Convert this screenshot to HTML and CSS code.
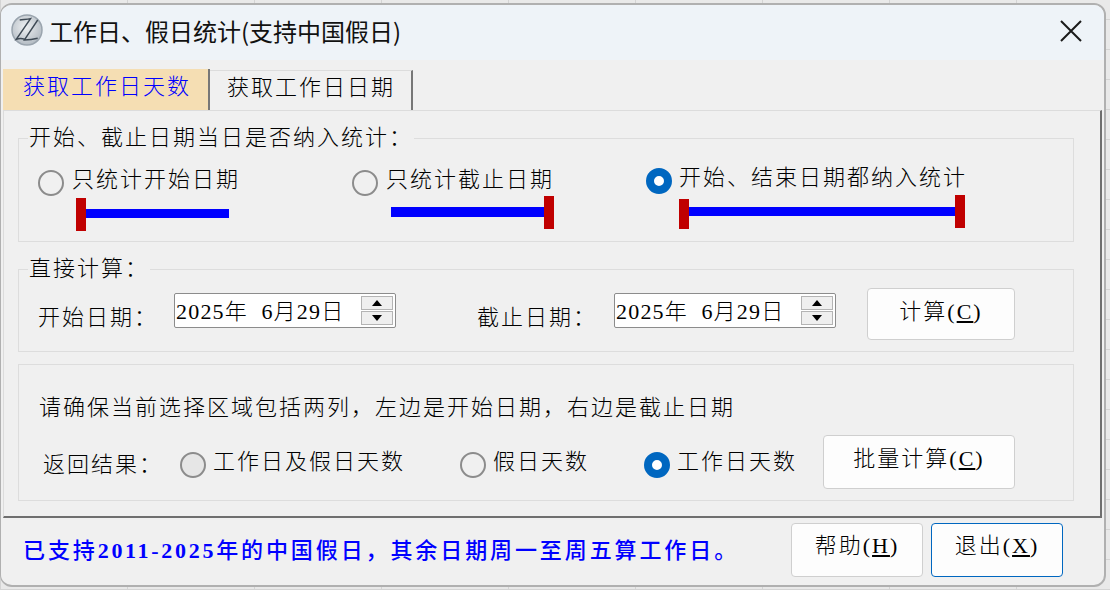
FILE: index.html
```html
<!DOCTYPE html>
<html lang="zh-CN">
<head>
    <meta charset="UTF-8">
    <meta name="viewport" content="width=device-width, initial-scale=1.0">
    <title>工作日、假日统计</title>
    <link rel="stylesheet" href="styles.css">
</head>
<body>
    <div class="window">
        <div class="titlebar">
            <svg class="app-icon" width="34" height="34" viewBox="0 0 34 34">
                <defs>
                    <radialGradient id="logoFill" cx="45%" cy="40%" r="60%">
                        <stop offset="0" stop-color="#eef0f2"/>
                        <stop offset="1" stop-color="#b4bcc4"/>
                    </radialGradient>
                </defs>
                <circle cx="17" cy="17" r="15" fill="url(#logoFill)" stroke="#9aa4ae" stroke-width="1.5"/>
                <path d="M9.7 7 C13 6.4 17 6.6 20.5 5.6 L6.3 26.3 C9 25.2 12.5 25.4 15 26.3" fill="none" stroke="#3f4a55" stroke-width="1.4"/>
                <path d="M27.7 7 L14.3 27 C18.5 27 23.5 26.4 27.7 25.3" fill="none" stroke="#3f4a55" stroke-width="1.4"/>
            </svg>
            <div class="title">工作日、假日统计(支持中国假日)</div>
            <svg class="close-icon" width="22" height="22" viewBox="0 0 22 22">
                <path d="M1 1 L21 21 M21 1 L1 21" stroke="#1a1a1a" stroke-width="2" fill="none"/>
            </svg>
        </div>

        <div class="tabs">
            <div class="tab tab-active">获取工作日天数</div>
            <div class="tab">获取工作日日期</div>
        </div>

        <div class="panel">
            <fieldset class="group group-range">
                <legend>开始、截止日期当日是否纳入统计：</legend>
                <div class="range-options">
                    <div class="range-option option-start">
                        <label class="radio-label"><span class="radio"></span>只统计开始日期</label>
                        <div class="span-bar span-start">
                            <span class="cap"></span><span class="line"></span>
                        </div>
                    </div>
                    <div class="range-option option-end">
                        <label class="radio-label"><span class="radio"></span>只统计截止日期</label>
                        <div class="span-bar span-end">
                            <span class="line"></span><span class="cap"></span>
                        </div>
                    </div>
                    <div class="range-option option-both">
                        <label class="radio-label"><span class="radio radio-checked"></span>开始、结束日期都纳入统计</label>
                        <div class="span-bar span-both">
                            <span class="cap"></span><span class="line"></span><span class="cap"></span>
                        </div>
                    </div>
                </div>
            </fieldset>

            <fieldset class="group group-direct">
                <legend>直接计算：</legend>
                <div class="direct-row">
                    <span class="field-label">开始日期：</span>
                    <div class="date-box">
                        <span class="date-text">2025年  6月29日</span>
                        <div class="spinner">
                            <span class="spin spin-up"></span>
                            <span class="spin spin-down"></span>
                        </div>
                    </div>
                    <span class="field-label label-end">截止日期：</span>
                    <div class="date-box">
                        <span class="date-text">2025年  6月29日</span>
                        <div class="spinner">
                            <span class="spin spin-up"></span>
                            <span class="spin spin-down"></span>
                        </div>
                    </div>
                    <button class="btn btn-calc">计算(<u>C</u>)</button>
                </div>
            </fieldset>

            <div class="group group-batch">
                <p class="batch-note">请确保当前选择区域包括两列，左边是开始日期，右边是截止日期</p>
                <div class="batch-row">
                    <span class="result-label">返回结果：</span>
                    <label class="radio-label result-both"><span class="radio radio-grey"></span>工作日及假日天数</label>
                    <label class="radio-label result-holiday"><span class="radio"></span>假日天数</label>
                    <label class="radio-label result-work"><span class="radio radio-checked"></span>工作日天数</label>
                    <button class="btn btn-batch">批量计算(<u>C</u>)</button>
                </div>
            </div>
        </div>

        <div class="footer">
            <div class="support-note">已支持<span class="num">2011-2025</span>年的中国假日，其余日期周一至周五算工作日。</div>
            <button class="btn btn-foot">帮助(<u>H</u>)</button>
            <button class="btn btn-foot btn-focus">退出(<u>X</u>)</button>
        </div>
    </div>
</body>
</html>
```
FILE: styles.css
```css
html, body {
    height: 100%;
}
body {
    margin: 0;
    overflow: hidden;
    background-color: #e9e9e9;
    background-image:
        repeating-linear-gradient(90deg, #d4d4d4 0, #d4d4d4 1px, transparent 1px, transparent 127px),
        repeating-linear-gradient(0deg, #d4d4d4 0, #d4d4d4 1px, transparent 1px, transparent 30px);
    font-family: "Liberation Serif", "Noto Sans CJK SC", serif;
    font-size: 22px;
    font-weight: 300;
    color: #000;
}
.window {
    box-sizing: border-box;
    width: 1106px;
    height: 584px;
    margin: 3px 0 0 0;
    background-color: #f0f0f0;
    border: 2px solid #b0b0b0;
    border-left-width: 1px;
    border-radius: 12px;
    overflow: hidden;
    display: flex;
    flex-direction: column;
}

/* title bar */
.titlebar {
    box-sizing: border-box;
    flex: none;
    height: 55px;
    background-color: #eef3f8;
    display: flex;
    align-items: center;
    padding: 0 22px 4px 9px;
}
.app-icon {
    flex: none;
    margin-bottom: 1px;
}
.title {
    margin-left: 5px;
    font-family: "Noto Sans CJK SC", sans-serif;
    font-weight: 400;
    font-size: 24px;
    color: #111;
    flex: 1;
}

/* tabs */
.tabs {
    flex: none;
    display: flex;
    height: 41px;
    margin-top: 9px;
    padding-left: 2px;
    align-items: flex-end;
}
.tab {
    box-sizing: border-box;
    height: 40px;
    width: 203px;
    padding-left: 17px;
    line-height: 33px;
    letter-spacing: 2px;
    background-color: #f0f0f0;
    border-top: 1px solid #dcdcdc;
    border-right: 2px solid #777;
}
.tab-active {
    height: 41px;
    width: 207px;
    padding-left: 20px;
    line-height: 36px;
    background-color: #f5deb3;
    color: #0000ff;
    border-top: 0;
}

/* main panel */
.panel {
    box-sizing: border-box;
    flex: none;
    height: 408px;
    margin-left: 2px;
    margin-right: 2px;
    padding: 14px 26px 0 14px;
    border-top: 1px solid #dcdcdc;
    border-left: 1px solid #dcdcdc;
    border-right: 2px solid #6f6f6f;
    border-bottom: 2px solid #6f6f6f;
    letter-spacing: 2px;
}
.group {
    box-sizing: border-box;
    margin: 0;
    padding: 0;
    border: 1px solid #dddddd;
    min-width: 0;
}
.group legend {
    margin-left: 9px;
    padding: 0 1px;
    line-height: 26px;
}
.group-range {
    height: 117px;
}
.group-direct {
    height: 96px;
    margin-top: 14px;
}
.group-batch {
    height: 137px;
    margin-top: 12px;
}

/* radios */
.radio-label {
    display: flex;
    align-items: center;
    gap: 8px;
    line-height: 26px;
    white-space: nowrap;
}
.radio {
    box-sizing: border-box;
    flex: none;
    width: 26px;
    height: 26px;
    margin-top: 6px;
    border: 2px solid #8c8c8c;
    border-radius: 50%;
    background-color: #f0f0f0;
}
.radio-grey {
    background-color: #e6e6e6;
}
.radio-checked {
    border: 8px solid #0067c0;
    background-color: #fff;
}

/* range picker options */
.range-options {
    display: flex;
    padding: 13px 0 0 19px;
}
.option-start {
    width: 314px;
}
.option-end {
    width: 294px;
}
.option-both {
    margin-top: -2px;
}
.option-both .radio-label {
    gap: 7px;
}
.span-bar {
    display: flex;
}
.cap {
    flex: none;
    width: 10px;
    height: 33px;
    background-color: #c00000;
}
.line {
    flex: none;
    height: 9px;
    background-color: #0000ff;
}
.span-start {
    margin: 2px 0 0 38px;
}
.span-start .line {
    width: 143px;
    margin-top: 11px;
}
.span-end {
    margin: 0 0 0 39px;
}
.span-end .line {
    width: 153px;
    height: 10px;
    margin-top: 11px;
}
.span-both {
    margin: 1px 0 0 33px;
}
.span-both .line {
    width: 266px;
    margin-top: 12px;
}
.span-both .cap:first-child {
    height: 30px;
    margin-top: 4px;
}

/* direct calculation row */
.direct-row {
    display: flex;
    align-items: flex-start;
    padding: 6px 0 0 19px;
}
.field-label {
    width: 136px;
    margin-top: 17px;
    line-height: 26px;
    white-space: nowrap;
}
.label-end {
    width: 137px;
    margin-left: 81px;
}
.date-box {
    box-sizing: border-box;
    flex: none;
    width: 222px;
    height: 35px;
    margin-top: 5px;
    background-color: #fff;
    border: 1px solid #8c8c8c;
    border-radius: 2px;
    display: flex;
    align-items: center;
    justify-content: space-between;
    padding: 0 2px 0 1px;
}
.date-text {
    padding-bottom: 4px;
    letter-spacing: 1.2px;
    white-space: pre;
}
.spinner {
    display: flex;
    flex-direction: column;
    gap: 1px;
}
.spin {
    box-sizing: border-box;
    display: flex;
    align-items: center;
    justify-content: center;
    width: 32px;
    height: 14px;
    background-color: #efefef;
    border: 1px solid #b4b4b4;
}
.spin::after {
    content: "";
    border-left: 5px solid transparent;
    border-right: 5px solid transparent;
}
.spin-up::after {
    border-bottom: 6px solid #000;
}
.spin-down::after {
    border-top: 6px solid #000;
}

/* buttons */
.btn {
    box-sizing: border-box;
    background-color: #fdfdfd;
    border: 1px solid #cfcfcf;
    border-radius: 4px;
    font-family: inherit;
    font-size: 22px;
    font-weight: 300;
    letter-spacing: 2px;
    color: #000;
    padding: 0 0 10px 0;
}
.btn-calc {
    width: 148px;
    height: 52px;
    margin-left: 31px;
}
.btn-batch {
    flex: none;
    width: 192px;
    height: 54px;
    padding-bottom: 12px;
}
.btn-foot {
    flex: none;
    width: 132px;
    height: 54px;
    margin-left: 8px;
    padding-bottom: 14px;
}
.btn-focus {
    border-color: #0067c0;
}

/* batch group */
.batch-note {
    margin: 30px 0 0 20px;
    line-height: 26px;
}
.batch-row {
    display: flex;
    align-items: flex-start;
    margin-top: 14px;
    padding-left: 24px;
}
.result-label {
    flex: none;
    width: 137px;
    margin-top: 17px;
    line-height: 26px;
    white-space: nowrap;
}
.radio-label.result-both,
.radio-label.result-holiday,
.radio-label.result-work {
    flex: none;
    gap: 7px;
    margin-top: 11px;
}
.result-both {
    width: 280px;
}
.result-holiday {
    width: 184px;
}
.result-work {
    width: 179px;
}

/* footer */
.footer {
    flex: 1;
    display: flex;
    align-items: center;
    padding: 0 41px 3px 22px;
}
.support-note {
    flex: 1;
    color: #0000ff;
    font-weight: 500;
    letter-spacing: 2.9px;
    white-space: nowrap;
    margin-bottom: 5px;
}
.num {
    font-weight: 700;
    letter-spacing: 2.7px;
}
```
